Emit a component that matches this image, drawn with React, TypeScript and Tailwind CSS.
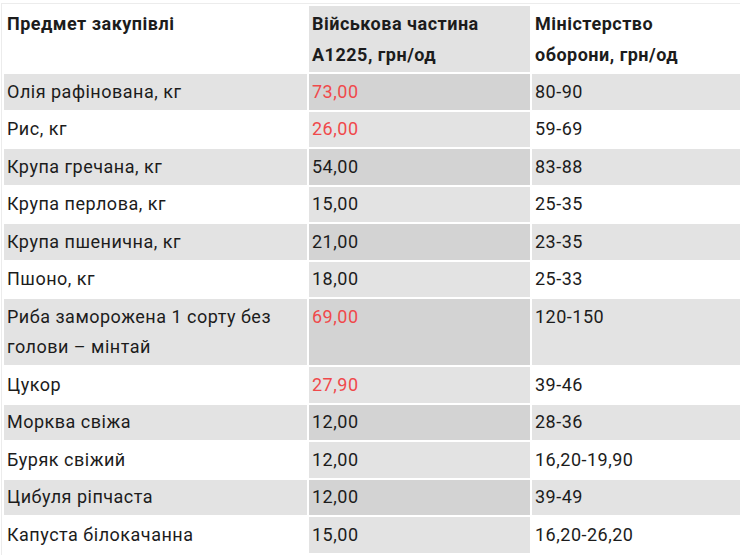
import React from "react";

type Row = { name: string; price: string; red?: boolean; range: string };

const rows: Row[] = [
  { name: "Олія рафінована, кг", price: "73,00", red: true, range: "80-90" },
  { name: "Рис, кг", price: "26,00", red: true, range: "59-69" },
  { name: "Крупа гречана, кг", price: "54,00", range: "83-88" },
  { name: "Крупа перлова, кг", price: "15,00", range: "25-35" },
  { name: "Крупа пшенична, кг", price: "21,00", range: "23-35" },
  { name: "Пшоно, кг", price: "18,00", range: "25-33" },
  { name: "Риба заморожена 1 сорту без голови – мінтай", price: "69,00", red: true, range: "120-150" },
  { name: "Цукор", price: "27,90", red: true, range: "39-46" },
  { name: "Морква свіжа", price: "12,00", range: "28-36" },
  { name: "Буряк свіжий", price: "12,00", range: "16,20-19,90" },
  { name: "Цибуля ріпчаста", price: "12,00", range: "39-49" },
  { name: "Капуста білокачанна", price: "15,00", range: "16,20-26,20" },
];

export default function App() {
  return (
    <div className="w-[740px] h-[555px] overflow-hidden bg-white pt-[3px] pl-[1px]" style={{ fontFamily: "Roboto, 'Noto Sans', sans-serif" }}>
      <table className="border-separate border-spacing-[2px] border border-[#ececec] text-[18px] tracking-[0.5px] leading-[30.5px] text-[#1c1c1c] w-[742px] table-fixed">
        <colgroup>
          <col className="w-[303px]" />
          <col className="w-[221px]" />
          <col />
        </colgroup>
        <thead>
          <tr>
            <th className="text-left align-top font-bold px-[3px] pt-[3px] pb-[2px] bg-white">Предмет закупівлі</th>
            <th className="text-left align-top font-bold px-[3px] pt-[3px] pb-[2px] bg-[#e2e2e2]">Військова частина А1225, грн/од</th>
            <th className="text-left align-top font-bold px-[3px] pt-[3px] pb-[2px] bg-white">Міністерство оборони, грн/од</th>
          </tr>
        </thead>
        <tbody>
          {rows.map((r, i) => {
            const odd = i % 2 === 0;
            return (
              <tr key={i}>
                <td className={`align-top px-[3px] py-[2.5px] ${odd ? "bg-[#e3e3e3]" : "bg-white"}`}>{r.name}</td>
                <td className={`align-top px-[3px] py-[2.5px] ${odd ? "bg-[#d3d3d3]" : "bg-[#e3e3e3]"} ${r.red ? "text-[#f0494b]" : ""}`}>{r.price}</td>
                <td className={`align-top px-[3px] py-[2.5px] ${odd ? "bg-[#e3e3e3]" : "bg-white"}`}>{r.range}</td>
              </tr>
            );
          })}
        </tbody>
      </table>
    </div>
  );
}
